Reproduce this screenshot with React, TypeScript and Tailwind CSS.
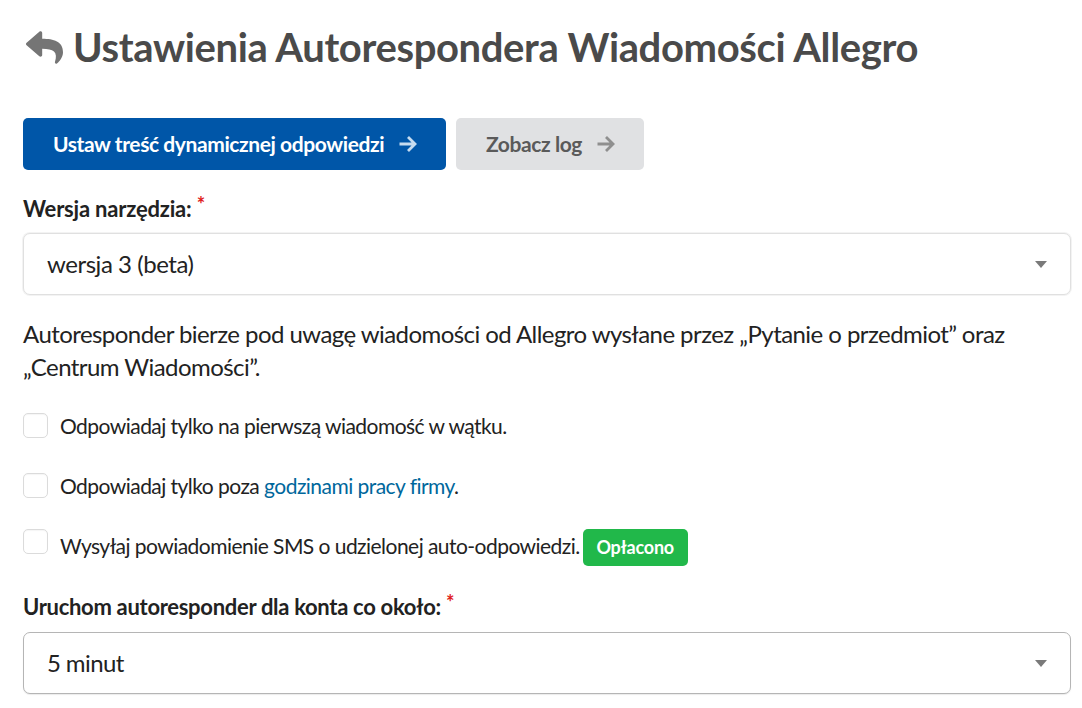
import { FaReply } from 'react-icons/fa';

function Arrow({ className }: { className: string }) {
  return (
    <svg viewBox="0 0 20 20" className={className} fill="none" stroke="currentColor" strokeWidth="2.8">
      <path d="M1.5 10h15.5M10 3l7 7-7 7" />
    </svg>
  );
}

function Caret() {
  return <div className="w-0 h-0 border-x-[6px] border-x-transparent border-t-[7px] border-t-[#7a7a7a]" />;
}

function Check({ children, className }: { children: React.ReactNode; className: string }) {
  return (
    <label className={`flex items-start ${className}`}>
      <span className="w-[25px] h-[25px] shrink-0 rounded-[5px] border border-[#dbdbdb] bg-white shadow-[inset_0_1px_1px_rgba(0,0,0,0.04)]" />
      {children}
    </label>
  );
}

export default function App() {
  return (
    <div className="w-[1082px] h-[708px] overflow-hidden bg-white pl-[23px] pr-[11px] font-['Lato',sans-serif] text-[#222222]">
      <h1 className="flex items-center h-[44px] mt-[25px] text-[40px] tracking-[-0.37px] leading-[44px] font-bold text-[#4a4a4a] whitespace-nowrap">
        <FaReply className="w-[43px] h-[37px] mr-[7px] text-[#757575]" />
        Ustawienia Autorespondera Wiadomości Allegro
      </h1>

      <div className="flex gap-[10px] mt-[49px]">
        <button className="flex items-center h-[52px] w-[423px] pl-[30px] rounded-[5px] bg-[#0056a8] text-white text-[21px] tracking-[-0.41px] font-bold">
          Ustaw treść dynamicznej odpowiedzi
          <Arrow className="w-[20px] h-[20px] ml-[14px] text-[#c6dcf0]" />
        </button>
        <button className="flex items-center h-[52px] w-[188px] pl-[30px] rounded-[5px] bg-[#e0e1e3] text-[#5a5a5a] text-[21px] tracking-[-0.41px] font-bold">
          Zobacz log
          <Arrow className="w-[20px] h-[20px] ml-[14px] text-[#8f8f8f]" />
        </button>
      </div>

      <div className="mt-[26px] h-[26px] text-[22px] tracking-[-0.2px] leading-[26px] font-bold">
        Wersja narzędzia: <sup className="top-[-5px] text-[#e02020] font-bold text-[20px] tracking-normal">*</sup>
      </div>
      <div className="flex items-center justify-between h-[62px] mt-[11px] pl-[23px] pr-[23px] rounded-[7px] border border-[#e0e0e0] shadow-[0_0_0_1px_#f3f3f3] bg-white text-[24px] tracking-[-0.45px]">
        wersja 3 (beta)
        <Caret />
      </div>

      <p className="mt-[22px] text-[24px] tracking-[-0.56px] leading-[33px] w-[1020px]">
        Autoresponder bierze pod uwagę wiadomości od Allegro wysłane przez „Pytanie o przedmiot” oraz „Centrum Wiadomości”.
      </p>

      <Check className="mt-[30px] h-[25px] text-[21px] tracking-[-0.54px] leading-[25px]">
        <span className="ml-[12px]">Odpowiadaj tylko na pierwszą wiadomość w wątku.</span>
      </Check>
      <Check className="mt-[35px] h-[25px] text-[21px] tracking-[-0.54px] leading-[25px]">
        <span className="ml-[12px]">
          Odpowiadaj tylko poza <a className="text-[#00679c]">godzinami pracy firmy</a>.
        </span>
      </Check>
      <Check className="mt-[31px] h-[38px] text-[21px] tracking-[-0.54px] leading-[25px]">
        <span className="ml-[12px] mt-[4px]">Wysyłaj powiadomienie SMS o udzielonej auto-odpowiedzi.</span>
        <span className="flex items-center justify-center w-[105px] h-[37px] ml-[3px] rounded-[5px] bg-[#21b84a] text-white text-[18px] tracking-[-0.17px] font-bold">
          Opłacono
        </span>
      </Check>

      <div className="mt-[27px] h-[26px] text-[22px] tracking-[-0.3px] leading-[26px] font-bold">
        Uruchom autoresponder dla konta co około: <sup className="top-[-5px] text-[#e02020] font-bold text-[20px] tracking-normal">*</sup>
      </div>
      <div className="flex items-center justify-between h-[62px] mt-[12px] pl-[23px] pr-[23px] rounded-[7px] border border-[#b5b5b5] shadow-[0_1px_1px_rgba(0,0,0,0.08)] bg-white text-[24px] tracking-[-0.6px]">
        5 minut
        <Caret />
      </div>
    </div>
  );
}
